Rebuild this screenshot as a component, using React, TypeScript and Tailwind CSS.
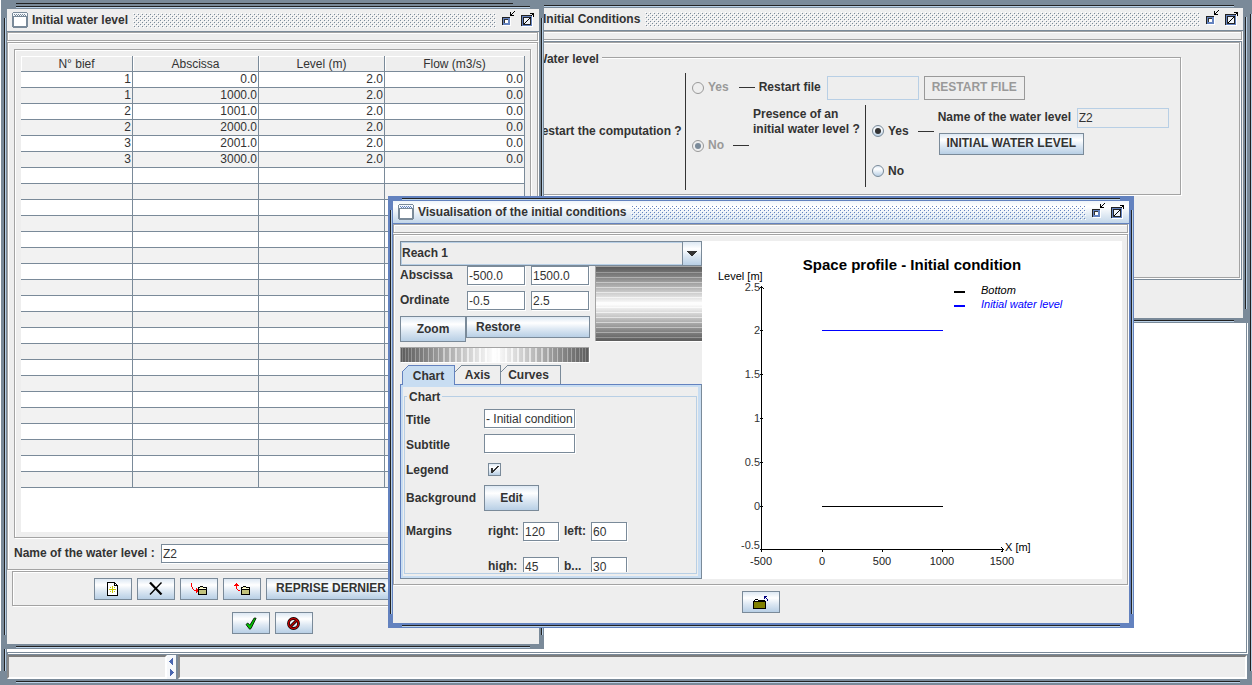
import React from "react";

const BTN =
  "border border-[#7a8a99] bg-[linear-gradient(to_bottom,#dde8f3,#ffffff_30%,#dde8f3_60%,#b8cfe5)] font-bold text-[#333] flex items-center justify-center shrink-0 whitespace-nowrap";
const ETCH =
  "border border-[#a3a3a3] shadow-[1px_1px_0_#fff,inset_1px_1px_0_#fff] mr-px mb-px";
const FIELD =
  "border border-[#7a8a99] bg-white shadow-[1px_1px_0_#fff] font-normal text-[#333] px-px h-[19px] min-w-0 rounded-none outline-none";
const FIELD_OFF =
  "border border-[#b8cfe5] bg-[#eee] font-normal text-[#333] px-px min-w-0 rounded-none outline-none";

function Bumps({ id, color }: { id: string; color: string }) {
  return (
    <svg className="h-[15px] min-w-0 flex-1" aria-hidden="true" shapeRendering="crispEdges">
      <defs>
        <pattern id={id} width="4" height="4" patternUnits="userSpaceOnUse">
          <rect x="0" y="0" width="1" height="1" fill="#fff" />
          <rect x="2" y="2" width="1" height="1" fill="#fff" />
          <rect x="1" y="1" width="1" height="1" fill={color} />
          <rect x="3" y="3" width="1" height="1" fill={color} />
        </pattern>
      </defs>
      <rect width="100%" height="100%" fill={`url(#${id})`} />
    </svg>
  );
}

function WindowIcon({ color }: { color: string }) {
  return (
    <svg width="16" height="16" viewBox="0 0 16 16" shapeRendering="crispEdges" className="shrink-0">
      <path d="M1 0h14v1h1v14h-1v1H1v-1H0V1h1z" fill="#7a8a99" />
      <rect x="1" y="1" width="14" height="4" fill="#f4f8fc" />
      <path d="M2 2h1v1h-1zM4 2h1v1h-1zM6 2h1v1h-1zM8 2h1v1h-1zM10 2h1v1h-1zM12 2h1v1h-1zM3 3h1v1h-1zM5 3h1v1h-1zM7 3h1v1h-1zM9 3h1v1h-1zM11 3h1v1h-1zM13 3h1v1h-1z" fill={color} />
      <rect x="1" y="4" width="14" height="1" fill="#7a8a99" />
      <rect x="2" y="5" width="12" height="9" fill="#fff" />
    </svg>
  );
}

function MinIcon() {
  return (
    <svg className="block" width="18" height="18" viewBox="0 0 18 18" shapeRendering="crispEdges">
      <path d="M4 7h8v8H4z" fill="#fff" />
      <path d="M3 6h8v8H3z" fill="#222" />
      <path d="M4 7h7v7H4z" fill="#6382bf" />
      <path d="M5 8h4v4H5z" fill="#333" />
      <path d="M6 9h3v3H6z" fill="#fff" />
      <path d="M11 1h1v3h-1zM11 4h4v1h-4zM12 3h1v1h-1zM13 2h1v1h-1zM14 1h1v1h-1zM15 0h1v1h-1z" fill="#000" />
    </svg>
  );
}

function MaxIcon() {
  return (
    <svg className="block" width="16" height="18" viewBox="0 0 16 18" shapeRendering="crispEdges">
      <path d="M3 5h11v11H3z" fill="#fff" />
      <path d="M2 4h11v11H2z" fill="#222" />
      <path d="M3 5h10v10H3z" fill="#6382bf" />
      <path d="M4 6h8v8H4z" fill="#222" />
      <path d="M5 7h6v6H5z" fill="#eef3fa" />
      <path d="M5 12h1v1H5zM6 11h1v1H6zM7 10h1v1H7zM8 9h1v1H8zM9 8h1v1H9zM10 7h1v1h-1zM11 6h1v1h-1zM12 4h1v1h-1zM13 3h1v1h-1zM11 2h4v1h-4zM14 2h1v4h-1z" fill="#000" />
    </svg>
  );
}

type FrameProps = {
  id: string;
  title: string;
  place: string;
  active?: boolean;
  children: React.ReactNode;
};

function Frame({ id, title, place, active, children }: FrameProps) {
  const line = active ? "#6382bf" : "#7a8a99";
  return (
    <section
      aria-label={title}
      className={`absolute flex flex-col p-[5px] ${active ? "bg-[#6382bf]" : "bg-[#7a8a99]"} ${place}`}
    >
      <i className="absolute left-[14px] right-[14px] top-[2px] h-[2px] border-t border-[#222] bg-[#b8cfe5]" />
      <i className="absolute bottom-[1px] left-[14px] right-[14px] h-[2px] border-t border-[#222] bg-[#b8cfe5]" />
      <i className="absolute bottom-[14px] left-[2px] top-[14px] w-[2px] border-l border-[#222] bg-[#b8cfe5]" />
      <i className="absolute bottom-[14px] right-[1px] top-[14px] w-[2px] border-l border-[#222] bg-[#b8cfe5]" />
      <header
        className={`flex h-[23px] shrink-0 items-center border-b pl-[5px] pr-1 ${
          active
            ? "border-[#6382bf] bg-[linear-gradient(to_bottom,#eef4fa,#ffffff_25%,#c3d6e9)]"
            : "border-[#7a8a99] bg-[#eee]"
        }`}
      >
        <WindowIcon color={line} />
        <h2 className="ml-1 mr-[5px] whitespace-nowrap font-bold">{title}</h2>
        <Bumps id={id} color={line} />
        <button type="button" aria-label="Minimise" className="ml-[3px]">
          <MinIcon />
        </button>
        <button type="button" aria-label="Maximise" className="ml-[2px]">
          <MaxIcon />
        </button>
      </header>
      <div className="flex min-h-0 flex-1 flex-col bg-[#eee]">{children}</div>
    </section>
  );
}

const ROWS: string[][] = [
  ["1", "0.0", "2.0", "0.0"],
  ["1", "1000.0", "2.0", "0.0"],
  ["2", "1001.0", "2.0", "0.0"],
  ["2", "2000.0", "2.0", "0.0"],
  ["3", "2001.0", "2.0", "0.0"],
  ["3", "3000.0", "2.0", "0.0"],
  ...Array.from({ length: 20 }, () => ["", "", "", ""]),
];

function NewIcon() {
  return (
    <svg width="14" height="14" viewBox="0 0 14 14" shapeRendering="crispEdges">
      <path d="M1 0h8v1h1v1h1v1h1v11H1z" fill="#000" />
      <path d="M2 1h6v3h3v9H2z" fill="#fff" />
      <path d="M9 2h1v1H9z" fill="#fff" />
      <path d="M6 4h1v7H6zM3 7h7v1H3zM4 5h1v1H4zM8 5h1v1H8zM4 9h1v1H4zM8 9h1v1H8z" fill="#c8c800" />
    </svg>
  );
}

function DeleteIcon() {
  return (
    <svg width="14" height="13" viewBox="0 0 14 13">
      <path d="M1 0.5L12.5 12.5" stroke="#000" strokeWidth="2.2" />
      <path d="M12.5 0.5L1 12.5" stroke="#000" strokeWidth="1.4" />
    </svg>
  );
}

function SmallFolder() {
  return (
    <g>
      <path d="M7 5h1V4h3v1h4v8H6V5z" fill="#000" />
      <path d="M8 5h3v1H8z" fill="#e6e6a8" />
      <path d="M7 6h7v1H7z" fill="#ffffd8" />
      <path d="M7 8h7v4H7z" fill="#c2c27c" />
    </g>
  );
}

function ImportIcon() {
  return (
    <svg width="17" height="13" viewBox="-1 0 17 13" shapeRendering="crispEdges">
      <SmallFolder />
      <path d="M-1 1h1v4h-1zM0 5h1v2H0zM1 7h1v1H1zM2 8h4v1H2zM4 6h1v5H4zM5 7h1v3H5z" fill="#f00" />
    </svg>
  );
}

function ExportIcon() {
  return (
    <svg width="17" height="13" viewBox="-1 0 17 13" shapeRendering="crispEdges">
      <SmallFolder />
      <path d="M1 1h1v6H1zM0 2h3v1H0zM-1 3h5v1h-5zM2 7h1v1H2zM3 8h2v1H3z" fill="#f00" />
    </svg>
  );
}

function OkIcon() {
  return (
    <svg width="12" height="13" viewBox="0 0 12 13">
      <path d="M1 7.5L2.8 6l2 2.2L9.2 1l1.9.2L6 11.6l-1.4.6z" fill="#00c800" stroke="#001800" strokeWidth="0.9" />
    </svg>
  );
}

function CancelIcon() {
  return (
    <svg width="13" height="13" viewBox="0 0 13 13">
      <circle cx="6.5" cy="6.5" r="5" fill="none" stroke="#000" strokeWidth="2.8" />
      <path d="M3 10L10 3" stroke="#000" strokeWidth="3" />
      <circle cx="6.5" cy="6.5" r="5" fill="none" stroke="#c00000" strokeWidth="1.4" />
      <path d="M3.3 9.7L9.7 3.3" stroke="#c00000" strokeWidth="1.4" />
    </svg>
  );
}

function LevelWindow() {
  return (
    <Frame id="bumpsLevel" title="Initial water level" place="left-[2px] top-[4px] w-[542px] h-[645px]">
      <div className={`${ETCH} h-[9px] shrink-0`} />
      <div className={`${ETCH} flex h-[528px] flex-col p-[6px] pr-[5px]`}>
        <div className={`${ETCH} h-[489px] p-[6px] pb-[5px] pr-[5px]`}>
          <div className="h-full bg-white">
            <table className="w-full table-fixed border-separate border-spacing-0">
              <colgroup>
                <col className="w-[112px]" />
                <col className="w-[126px]" />
                <col className="w-[126px]" />
                <col />
              </colgroup>
              <thead>
                <tr className="h-4 bg-[#eee]">
                  {["N° bief", "Abscissa", "Level (m)", "Flow (m3/s)"].map((h) => (
                    <th
                      key={h}
                      className="border-b border-r border-[#7a8a99] p-0 pt-[2px] text-center font-normal leading-[13px] shadow-[inset_1px_1px_0_#fff]"
                    >
                      {h}
                    </th>
                  ))}
                </tr>
              </thead>
              <tbody>
                {ROWS.map((row, r) => (
                  <tr key={r} className="h-4 odd:bg-white even:bg-[#f2f2f2]">
                    {row.map((v, c) => (
                      <td key={c} className="border-b border-r border-[#7a8a99] p-0 pr-px text-right leading-[15px]">
                        {v}
                      </td>
                    ))}
                  </tr>
                ))}
              </tbody>
            </table>
          </div>
        </div>
        <div className="mt-[5px] flex items-center">
          <label htmlFor="level-name" className="w-[147px] whitespace-nowrap font-bold">
            Name of the water level :
          </label>
          <input id="level-name" className={`${FIELD} flex-1`} defaultValue="Z2" />
        </div>
      </div>
      <div className={`${ETCH} ml-[5px] flex h-[35px] shrink-0 items-center justify-center gap-[5px]`}>
        <button type="button" aria-label="New" className={`${BTN} h-[22px] w-[38px]`}><NewIcon /></button>
        <button type="button" aria-label="Delete" className={`${BTN} h-[22px] w-[38px]`}><DeleteIcon /></button>
        <button type="button" aria-label="Import" className={`${BTN} h-[22px] w-[38px]`}><ImportIcon /></button>
        <button type="button" aria-label="Export" className={`${BTN} h-[22px] w-[38px]`}><ExportIcon /></button>
        <button type="button" className={`${BTN} h-[22px] w-[190px] justify-start pl-[9px]`}>REPRISE DERNIER RESULTAT</button>
      </div>
      <div className="mt-[5px] flex justify-center gap-[5px] pr-[2px]">
        <button type="button" aria-label="Validate" className={`${BTN} h-[22px] w-[38px]`}><OkIcon /></button>
        <button type="button" aria-label="Cancel" className={`${BTN} h-[22px] w-[38px]`}><CancelIcon /></button>
      </div>
    </Frame>
  );
}

type RadioProps = { name: string; label: string; checked?: boolean; disabled?: boolean };

function Radio({ name, label, checked, disabled }: RadioProps) {
  return (
    <label className={`flex items-center gap-1 font-bold ${disabled ? "text-[#999]" : "text-[#333]"}`}>
      <span className="relative flex size-3 items-center justify-center">
        <input
          type="radio"
          name={name}
          defaultChecked={checked}
          disabled={disabled}
          className={`size-3 appearance-none rounded-full border ${
            disabled ? "border-[#999] bg-[#eee]" : "border-[#7a8a99] bg-[linear-gradient(to_bottom,#dde8f3,#ffffff_30%,#b8cfe5)]"
          }`}
        />
        {checked && (
          <span className={`pointer-events-none absolute size-[6px] rounded-full ${disabled ? "bg-[#7a8a99]" : "bg-[#333]"}`} />
        )}
      </span>
      {label}
    </label>
  );
}

function ConditionsWindow() {
  return (
    <Frame id="bumpsCond" title="Initial Conditions" place="left-[513px] right-[4px] top-[3px] h-[320px]">
      <div className={`${ETCH} h-[9px] shrink-0`} />
      <div className="mr-[1px] h-[239px] border border-[#7a8a99]">
        <div className={`${ETCH} h-[236px] pl-[6px] pt-2`}>
          <fieldset className={`${ETCH} relative mt-[6px] flex h-[138px] w-[655px] items-center pl-[6px] pt-[10px]`}>
            <legend className="absolute -top-[6px] left-[6px] bg-[#eee] px-[3px] font-bold leading-[14px]">Water level</legend>
            <span className="w-[152px] whitespace-nowrap text-left font-bold">Restart the computation ?</span>
            <i className="h-[117px] w-px bg-[#333]" />
            <div className="flex h-[111px] flex-col gap-[5px] pl-[6px]">
              <div className="flex h-6 items-center">
                <Radio name="restart" label="Yes" disabled />
                <i className="ml-[10px] h-px w-4 bg-[#333]" />
                <label htmlFor="restart-file" className="ml-1 w-[68px] whitespace-nowrap font-bold">Restart file</label>
                <input id="restart-file" disabled className={`${FIELD_OFF} h-6 w-[92px]`} />
                <button type="button" disabled className="ml-[5px] h-6 w-[101px] border border-[#999] font-bold text-[#999]">
                  RESTART FILE
                </button>
              </div>
              <div className="flex h-[82px] items-center">
                <Radio name="restart" label="No" checked disabled />
                <i className="ml-[9px] h-px w-4 bg-[#333]" />
                <p className="ml-1 w-[112px] self-start whitespace-nowrap pt-[2px] font-bold leading-[15px]">
                  Presence of an<br />initial water level ?
                </p>
                <i className="h-full w-px bg-[#333]" />
                <div className="flex h-full flex-col pl-[6px] pt-[3px]">
                  <div className="flex items-center">
                    <Radio name="presence" label="Yes" checked />
                    <i className="ml-[9px] h-px w-4 bg-[#333]" />
                    <div className="ml-1">
                      <div className="flex items-center">
                        <label htmlFor="wl-name" className="w-[139px] whitespace-nowrap font-bold">Name of the water level</label>
                        <input id="wl-name" readOnly className={`${FIELD_OFF} h-5 w-[92px]`} defaultValue="Z2" />
                      </div>
                      <button type="button" className={`${BTN} ml-px mt-[5px] h-[22px] w-[145px]`}>INITIAL WATER LEVEL</button>
                    </div>
                  </div>
                  <div className="mt-[9px]">
                    <Radio name="presence" label="No" />
                  </div>
                </div>
              </div>
            </div>
          </fieldset>
        </div>
      </div>
    </Frame>
  );
}

function WheelShade({ id, vertical }: { id: string; vertical?: boolean }) {
  return (
    <>
      <defs>
        <linearGradient id={id} x1="0" y1="0" x2={vertical ? "0" : "1"} y2={vertical ? "1" : "0"}>
          <stop offset="0" stopColor="#5c5c5c" />
          <stop offset="0.12" stopColor="#808080" />
          <stop offset="0.3" stopColor="#bdbdbd" />
          <stop offset="0.5" stopColor="#fff" />
          <stop offset="0.7" stopColor="#bdbdbd" />
          <stop offset="0.88" stopColor="#808080" />
          <stop offset="1" stopColor="#5c5c5c" />
        </linearGradient>
      </defs>
      <rect width="100%" height="100%" fill={`url(#${id})`} />
    </>
  );
}

function HorizontalWheel() {
  const n = 38;
  const lines = Array.from({ length: n }, (_, i) => {
    const t = (2 * (i + 0.5)) / n - 1;
    return Math.round(94 + 94 * Math.sin(t * 1.2) / Math.sin(1.2));
  });
  return (
    <svg className="h-[15px] w-[189px] border-l border-t border-[#a3a3a3] shadow-[1px_1px_0_#fff]" shapeRendering="crispEdges">
      <WheelShade id="wheelH" />
      {lines.map((x, i) => {
        const near = 1 - Math.abs(x - 94) / 94;
        return <rect key={i} x={x} y="0" width={near > 0.4 ? 2 : 1} height="15" fill="#fff" opacity={0.2 + 0.6 * near} />;
      })}
    </svg>
  );
}

function VerticalWheel() {
  return (
    <svg className="h-[75px] min-w-0 flex-1 border-l border-t border-[#a3a3a3] shadow-[1px_1px_0_#fff]" shapeRendering="crispEdges">
      <WheelShade id="wheelV" vertical />
      {Array.from({ length: 14 }, (_, i) => (
        <rect key={i} x="0" y={5 + i * 5} width="100%" height="1" fill="#fff" opacity={0.25 + 0.5 * (1 - Math.abs(i - 6.5) / 7)} />
      ))}
    </svg>
  );
}

function Chart() {
  const yTicks: [string, number][] = [["2.5", 46], ["2", 89], ["1.5", 133], ["1", 177], ["0.5", 221], ["0", 265], ["-0.5", 308]];
  const xTicks: [string, number][] = [["-500", 59], ["0", 120], ["500", 180], ["1000", 240], ["1500", 300]];
  return (
    <svg
      className="h-[338px] min-w-0 flex-1 bg-white [font-family:'Liberation_Sans',Arial,sans-serif]"
      role="img"
      aria-label="Space profile chart"
    >
      <text x="210" y="29" textAnchor="middle" fontSize="15" fontWeight="bold">Space profile - Initial condition</text>
      <text x="16" y="39" fontSize="11">Level [m]</text>
      <g shapeRendering="crispEdges">
        <rect x="59" y="45" width="1" height="264" />
        <rect x="59" y="308" width="243" height="1" />
        {yTicks.map(([t, y]) => <rect key={t} x="58" y={y} width="3" height="1" />)}
        {xTicks.map(([t, x]) => <rect key={t} x={x} y="308" width="1" height="3" />)}
        <path d="M59 45h1v1h1v1h1v1h-1v-1h-3v1h-1v-1h1v-1h1z" />
        <path d="M299 306h1v1h1v1h1v1h-1v1h-1v1h-1v-1h1v-3h-1z" />
        <rect x="120" y="89" width="121" height="1" fill="#00f" />
        <rect x="120" y="265" width="121" height="1" />
        <rect x="252" y="50" width="11" height="2" />
        <rect x="252" y="64" width="11" height="2" fill="#00f" />
      </g>
      <g fontSize="11">
        {yTicks.map(([t, y]) => (
          <text key={t} x="58" y={t === "-0.5" ? y : y + 4} textAnchor="end" fill="#333">{t}</text>
        ))}
        {xTicks.map(([t, x]) => (
          <text key={t} x={x} y="324" textAnchor="middle" fill="#222">{t}</text>
        ))}
        <text x="303" y="310">X [m]</text>
        <text x="279" y="53" fontStyle="italic">Bottom</text>
        <text x="279" y="67" fontStyle="italic" fill="#00f">Initial water level</text>
      </g>
    </svg>
  );
}

function Tab({ label, selected, size }: { label: string; selected?: boolean; size: string }) {
  return (
    <button
      type="button"
      role="tab"
      aria-selected={!!selected}
      className={`relative border-r border-t font-bold leading-[18px] ${size} ${
        selected ? "z-10 -mb-px h-[20px] border-l border-[#6382bf] bg-[#c8ddf2]" : "h-[19px] border-[#7a8a99] bg-[#eee]"
      }`}
    >
      <svg
        className={`absolute -top-px ${selected ? "-left-px" : "left-0"}`}
        width="7"
        height="7"
        viewBox="0 0 7 7"
        shapeRendering="crispEdges"
      >
        <path d="M0 0h6L0 6z" fill="#eee" />
        <path d="M6 0h1v1H6zM5 1h1v1H5zM4 2h1v1H4zM3 3h1v1H3zM2 4h1v1H2zM1 5h1v1H1zM0 6h1v1H0z" fill={selected ? "#6382bf" : "#7a8a99"} />
      </svg>
      {label}
    </button>
  );
}

function ViewWindow() {
  return (
    <Frame id="bumpsView" active title="Visualisation of the initial conditions" place="left-[388px] top-[196px] w-[746px] h-[432px]">
      <div className={`${ETCH} h-[9px] shrink-0`} />
      <div className={`${ETCH} flex h-[351px] p-[6px] pb-[5px] pr-[5px]`}>
        <div className="flex w-[302px] shrink-0 flex-col">
          <div className="relative h-[25px]">
            <select aria-label="Reach" className="h-full w-full appearance-none border border-[#7a8a99] bg-[#eee] pl-px font-bold text-[#333] shadow-[inset_0_0_0_1px_#b8cfe5] outline-none">
              <option>Reach 1</option>
            </select>
            <span className="pointer-events-none absolute bottom-0 right-0 top-0 flex w-5 items-center justify-center border border-[#7a8a99] bg-[linear-gradient(to_bottom,#dde8f3,#ffffff_30%,#dde8f3_60%,#b8cfe5)]">
              <svg width="10" height="5" viewBox="0 0 10 5" shapeRendering="crispEdges"><path d="M0 0h10v1H9v1H8v1H7v1H6v1H4V4H3V3H2V2H1V1H0z" fill="#333" /></svg>
            </span>
          </div>
          <div className="flex gap-[5px]">
            <div className="w-[190px]">
              <div className="flex h-[25px] items-start">
                <label htmlFor="abs-min" className="w-[67px] font-bold leading-[18px]">Abscissa</label>
                <input id="abs-min" className={`${FIELD} w-[58px]`} defaultValue="-500.0" />
                <input aria-label="Abscissa maximum" className={`${FIELD} ml-[6px] w-[58px]`} defaultValue="1500.0" />
              </div>
              <div className="flex h-[25px] items-start">
                <label htmlFor="ord-min" className="w-[67px] font-bold leading-[18px]">Ordinate</label>
                <input id="ord-min" className={`${FIELD} w-[58px]`} defaultValue="-0.5" />
                <input aria-label="Ordinate maximum" className={`${FIELD} ml-[6px] w-[58px]`} defaultValue="2.5" />
              </div>
              <div className="flex h-[31px] items-start">
                <button type="button" className={`${BTN} h-[26px] w-[66px]`}>Zoom</button>
                <button type="button" className={`${BTN} h-[22px] w-[124px] justify-start pl-[9px]`}>Restore</button>
              </div>
              <HorizontalWheel />
            </div>
            <VerticalWheel />
          </div>
          <div role="tablist" className="mt-[3px] flex pl-[2px]">
            <Tab label="Chart" selected size="w-[53px]" />
            <Tab label="Axis" size="w-[46px]" />
            <Tab label="Curves" size="w-[60px] pr-1" />
          </div>
          <div className="min-h-0 flex-1 border border-[#6382bf] border-b-[#7a8a99] border-r-[#7a8a99] bg-[#c8ddf2] p-[2px] pr-[3px]">
            <div className="h-full bg-[#eee] px-px pb-1 pt-[9px]">
              <fieldset className="relative h-[178px] border border-[#b8cfe5] pl-px pr-[2px]">
                <legend className="absolute -top-[7px] left-[2px] bg-[#eee] px-[2px] font-bold leading-[14px]">Chart</legend>
                <div className="flex h-[175px] flex-col overflow-hidden pt-[12px]">
                  <div className="flex h-[25px] shrink-0 items-start">
                    <label htmlFor="c-title" className="w-[78px] font-bold leading-[22px]">Title</label>
                    <input id="c-title" className={`${FIELD} w-[91px]`} defaultValue="- Initial condition" />
                  </div>
                  <div className="flex h-[25px] shrink-0 items-start">
                    <label htmlFor="c-sub" className="w-[78px] font-bold leading-[22px]">Subtitle</label>
                    <input id="c-sub" className={`${FIELD} w-[91px]`} />
                  </div>
                  <div className="flex h-[26px] shrink-0 items-start">
                    <label htmlFor="c-leg" className="w-[82px] font-bold leading-[22px]">Legend</label>
                    <span className="relative mt-1 size-[13px]">
                      <input id="c-leg" type="checkbox" defaultChecked className="block size-[13px] appearance-none border border-[#7a8a99] bg-[linear-gradient(to_bottom,#dde8f3,#ffffff_30%,#b8cfe5)]" />
                      <svg className="pointer-events-none absolute left-[3px] top-[3px]" width="8" height="7" viewBox="0 0 8 7" shapeRendering="crispEdges">
                        <path d="M0 2h2v2h1V3h1V2h1V1h1V0h2v1H7v1H6v1H5v1H4v1H3v1H2v1H0z" fill="#333" />
                      </svg>
                    </span>
                  </div>
                  <div className="flex h-[37px] shrink-0 items-start">
                    <label htmlFor="c-bg" className="w-[78px] font-bold leading-[26px]">Background</label>
                    <button id="c-bg" type="button" className={`${BTN} h-[26px] w-[55px]`}>Edit</button>
                  </div>
                  <div className="flex h-[35px] shrink-0 items-start font-bold leading-[18px]">
                    <span className="w-[82px]">Margins</span>
                    <label htmlFor="m-r" className="w-[35px]">right:</label>
                    <input id="m-r" className={`${FIELD} w-9`} defaultValue="120" />
                    <label htmlFor="m-l" className="ml-[5px] w-[27px]">left:</label>
                    <input id="m-l" className={`${FIELD} w-9`} defaultValue="60" />
                  </div>
                  <div className="flex shrink-0 items-start pl-[82px] font-bold leading-[18px]">
                    <label htmlFor="m-h" className="w-[35px]">high:</label>
                    <input id="m-h" className={`${FIELD} w-9`} defaultValue="45" />
                    <label htmlFor="m-b" className="ml-[5px] w-[27px]">b...</label>
                    <input id="m-b" className={`${FIELD} w-9`} defaultValue="30" />
                  </div>
                </div>
              </fieldset>
            </div>
          </div>
        </div>
        <Chart />
      </div>
      <div className="mt-[5px] flex justify-center">
        <button type="button" aria-label="Close" className={`${BTN} h-[22px] w-[38px]`}>
          <svg width="16" height="15" viewBox="0 0 16 15" shapeRendering="crispEdges">
            <path d="M1 5h1V4h3v1h7v1h1v8H0V6h1z" fill="#000" />
            <path d="M1 7h11v6H1z" fill="#808000" />
            <path d="M2 5h3v1H2z" fill="#fff" />
            <path d="M11 1h3v1h-1v1h1v1h1v2h-1V4h-1V3h-1v1h-1z" fill="#000080" />
          </svg>
        </button>
      </div>
    </Frame>
  );
}

export default function App() {
  return (
    <main className="relative flex h-screen min-h-[685px] w-full flex-col overflow-hidden bg-[#7a8a99] pb-[6px] pl-[7px] pr-[5px] pt-2 text-xs leading-[15px] text-[#333] [font-family:'Liberation_Sans',Arial,sans-serif]">
      <i className="absolute bottom-[14px] left-0 top-0 w-px bg-white" />
      <i className="absolute bottom-[14px] left-[4px] top-[16px] w-[2px] border-l border-[#222] bg-[#b8cfe5]" />
      <i className="absolute bottom-[14px] right-0 top-[14px] w-[2px] border-l border-[#222] bg-[#b8cfe5]" />
      <i className="absolute left-4 top-[3px] h-px w-[497px] bg-[#222]" />
      <i className="absolute bottom-[2px] left-4 right-[12px] h-[2px] border-t border-[#222] bg-[#b8cfe5]" />
      <div className="min-h-0 flex-1 border-b border-r border-[#7a8a99] bg-white shadow-[1px_1px_0_#fff]" />
      <ConditionsWindow />
      <LevelWindow />
      <ViewWindow />
      <footer className="mt-[2px] flex h-6 shrink-0 bg-[#eee]">
        <div className="w-40 border-2 border-b-white border-l-[#8a8a8a] border-r-white border-t-[#7d7d7d]" />
        <svg width="11" height="24" viewBox="0 0 11 24" shapeRendering="crispEdges">
          <rect width="11" height="24" fill="#f6f8fb" />
          <path d="M6 3v7H5V9H4V8H3V7H2V6h1V5h1V4h1V3zM3 14v7h1v-1h1v-1h1v-1h1v-1H6v-1H5v-1H4v-1z" fill="#4a66b0" />
          <rect x="9" width="2" height="24" fill="#7a8a99" />
        </svg>
        <div className="flex-1 border-2 border-b-white border-l-[#8a8a8a] border-r-white border-t-[#7d7d7d]" />
      </footer>
    </main>
  );
}
